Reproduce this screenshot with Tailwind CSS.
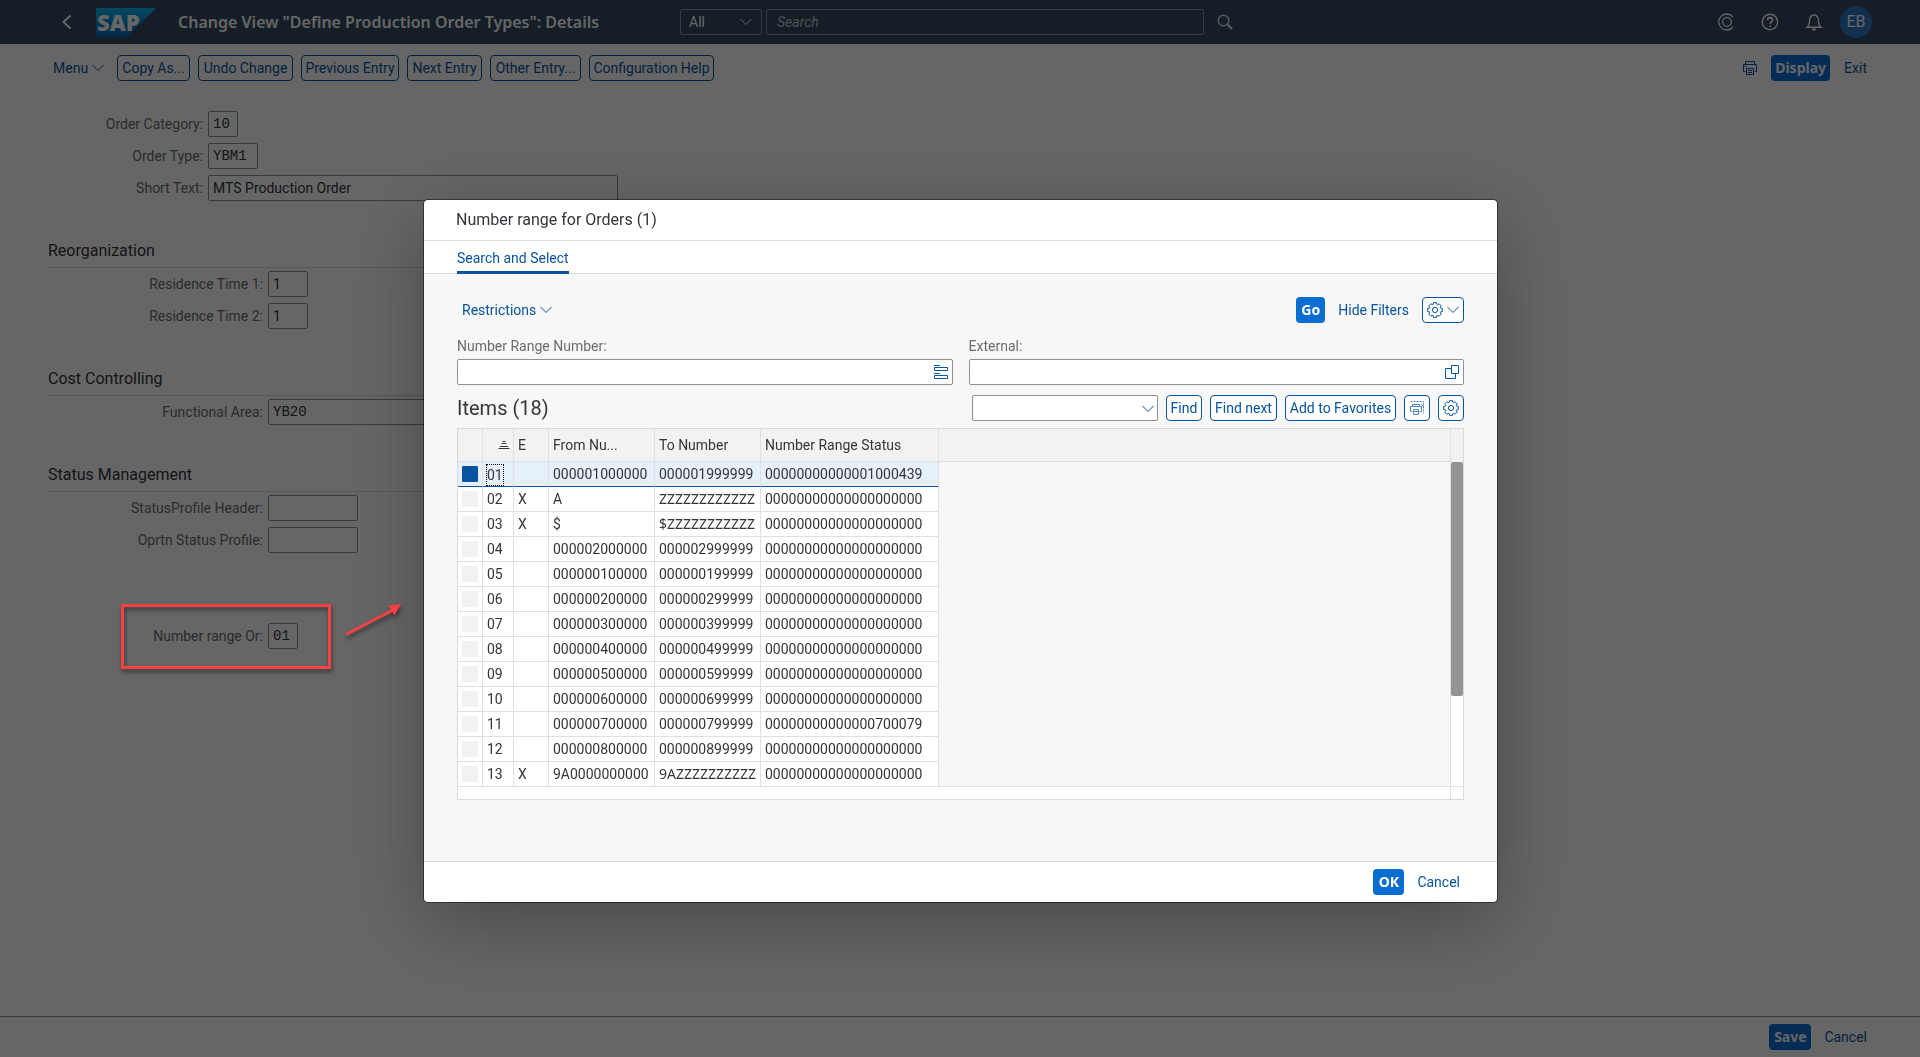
<!DOCTYPE html>
<html lang="en">
<head>
<meta charset="utf-8">
<meta name="viewport" content="width=device-width, initial-scale=1">
<title>Change View "Define Production Order Types": Details</title>
<script src="https://cdn.jsdelivr.net/npm/@tailwindcss/browser@4"></script>
</head>
<body class="min-h-screen bg-white font-['Roboto',sans-serif] text-sm text-[#32363a]">

<svg class="hidden" aria-hidden="true">
  <symbol id="gear" viewBox="-8 -8 16 16">
    <path d="M5.74-1.75 7.34-1.56V1.56L5.74 1.75 5.3 2.82 6.29 4.08 4.08 6.29 2.82 5.3 1.75 5.74 1.56 7.34H-1.56L-1.75 5.74-2.82 5.3-4.08 6.29-6.29 4.08-5.3 2.82-5.74 1.75-7.34 1.56V-1.56L-5.74-1.75-5.3-2.82-6.29-4.08-4.08-6.29-2.82-5.3-1.75-5.74-1.56-7.34H1.56L1.75-5.74 2.82-5.3 4.08-6.29 6.29-4.08 5.3-2.82Z" fill="none" stroke="currentColor" stroke-linejoin="round"/>
    <circle r="2.6" fill="none" stroke="currentColor"/>
  </symbol>
  <symbol id="chevron" viewBox="0 0 12 8">
    <path d="M.5 1 6 6.5 11.5 1" fill="none" stroke="currentColor"/>
  </symbol>
</svg>

<div class="flex min-h-screen flex-col">
  <!-- Shell bar -->
  <header class="grid h-11 grid-cols-[1fr_560px_1fr] items-center bg-[#354a5f] text-white">
    <div class="flex items-center pl-[61px]">
      <button type="button" aria-label="Back" class="w-[35px]">
        <svg class="h-4 w-3" viewBox="0 0 12 16" fill="none" stroke="currentColor" stroke-width="2"><path d="M9.500 1.500 2.500 8l7 6.500"/></svg>
      </button>
      <svg class="h-[29px] w-[60px]" viewBox="0 0 60 29" role="img" aria-label="SAP">
        <defs><linearGradient id="sap" x1="0" y1="0" x2="0" y2="1"><stop offset="0" stop-color="#00b8f1"/><stop offset="1" stop-color="#0d62b8"/></linearGradient></defs>
        <path d="M0 0H60L31 29H0Z" fill="url(#sap)"/>
        <text x="1" y="23" font-family="Open Sans, sans-serif" font-size="22" font-weight="800" fill="#fff">SAP</text>
      </svg>
      <h1 class="ml-[22px] whitespace-nowrap font-['Noto_Sans',sans-serif] text-base font-semibold">Change View "Define Production Order Types": Details</h1>
    </div>
    <form class="flex items-center gap-1">
      <div class="relative">
        <select aria-label="Search scope" class="block h-[26px] w-[82px] appearance-none rounded-[2px] border border-[#8396a8] bg-transparent px-2 text-white"><option>All</option></select>
        <svg class="pointer-events-none absolute top-2 right-[10px] h-[10px] w-3"><use href="#chevron"/></svg>
      </div>
      <input type="search" aria-label="Search" placeholder="Search" class="h-[26px] w-[438px] rounded-[2px] border border-[#8396a8] bg-transparent px-[10px] placeholder:text-[#c0ccd8] placeholder:italic">
      <button type="submit" aria-label="Search" class="pl-2">
        <svg class="h-[18px] w-[18px] text-[#d1e0ee]" viewBox="0 0 18 18" fill="none" stroke="currentColor"><circle cx="7.500" cy="7.500" r="5.300" stroke-width="1.400"/><path d="m11.500 11.500 4.500 4.500" stroke-width="2.400"/></svg>
      </button>
    </form>
    <div class="flex items-center justify-end pr-12">
      <button type="button" aria-label="Assistant" class="mr-[25px]">
        <svg class="h-[18px] w-[18px]" viewBox="0 0 18 18" fill="none" stroke="currentColor" stroke-width="1.300"><circle cx="9" cy="9" r="4.300"/><path d="M15 4A8 8 0 1 0 15 14"/></svg>
      </button>
      <button type="button" aria-label="Help" class="mr-[26px]">
        <svg class="h-[18px] w-[18px]" viewBox="0 0 18 18" fill="none" stroke="currentColor" stroke-width="1.400"><circle cx="9" cy="9" r="7.700"/><path d="M6.500 7.200c0-3.400 5-3.400 5 0 0 1.700-2.400 1.900-2.400 3.900M9.100 12.300v1.600" stroke-width="1.600"/></svg>
      </button>
      <button type="button" aria-label="Notifications" class="mr-[17px]">
        <svg class="h-[18px] w-[18px]" viewBox="0 0 18 18" fill="none" stroke="currentColor" stroke-width="1.400"><path d="M2 14.300c2-1.300 2.500-2.800 2.500-6C4.500 4.600 6 2 9 2s4.500 2.600 4.500 6.300c0 3.200.5 4.700 2.500 6Z"/><path d="M7.300 16.400h3.400" stroke-width="2"/></svg>
      </button>
      <button type="button" aria-label="User EB" class="h-8 w-8 rounded-full bg-[#2f78c4] text-base">EB</button>
    </div>
  </header>

  <!-- Page toolbar -->
  <nav aria-label="Actions" class="flex items-center gap-2 pt-[11px] pr-[53px] pl-[53px] text-[#0854a0]">
    <button type="button" class="flex w-14 items-center gap-1 whitespace-nowrap">Menu<svg class="h-2 w-3 shrink-0"><use href="#chevron"/></svg></button>
    <button type="button" class="h-[26px] w-[73px] rounded border border-[#0854a0] whitespace-nowrap">Copy As...</button>
    <button type="button" class="h-[26px] w-[95px] rounded border border-[#0854a0] whitespace-nowrap">Undo Change</button>
    <button type="button" class="h-[26px] w-[98px] rounded border border-[#0854a0] whitespace-nowrap">Previous Entry</button>
    <button type="button" class="h-[26px] w-[75px] rounded border border-[#0854a0] whitespace-nowrap">Next Entry</button>
    <button type="button" class="h-[26px] w-[91px] rounded border border-[#0854a0] whitespace-nowrap">Other Entry...</button>
    <button type="button" class="h-[26px] w-[125px] rounded border border-[#0854a0] whitespace-nowrap">Configuration Help</button>
    <div class="ml-auto flex items-center">
      <button type="button" aria-label="Print" class="mr-[13px]">
        <svg class="h-4 w-4" viewBox="0 0 16 16" fill="none" stroke="currentColor"><path d="M3.500 4.500v-3h9v3M3.500 11.500h-2v-7h13v7h-2M4.500 8.500h7v6h-7ZM6 10.500h4M6 12.500h4M2.500 6.500h2"/></svg>
      </button>
      <button type="button" class="mr-[14px] h-[26px] w-[59px] rounded bg-[#0a6ed1] font-['Noto_Sans',sans-serif] font-bold text-white">Display</button>
      <button type="button">Exit</button>
    </div>
  </nav>

  <!-- Order type form -->
  <main class="flex-1 pt-[27px] pl-12">
    <form class="w-[1200px] [&_h2]:h-8 [&_h2]:border-b [&_h2]:border-[#d9d9d9] [&_h2]:pt-[3px] [&_h2]:text-base [&_h2]:leading-6 [&_input]:h-[26px] [&_input]:rounded-[2px] [&_input]:border [&_input]:border-[#89919a] [&_input]:px-1 [&_input]:text-[#32363a] [&_label]:text-right [&_label]:text-[#6a6d70]">
      <div class="mb-8">
        <div class="flex h-8 items-center gap-[5px]"><label for="cat" class="w-[155px]">Order Category:</label><input id="cat" value="10" class="w-[30px] font-['Liberation_Mono',monospace]"></div>
        <div class="flex h-8 items-center gap-[5px]"><label for="type" class="w-[155px]">Order Type:</label><input id="type" value="YBM1" class="w-[50px] font-['Liberation_Mono',monospace]"></div>
        <div class="flex h-8 items-center gap-[5px]"><label for="short" class="w-[155px]">Short Text:</label><input id="short" value="MTS Production Order" class="w-[410px]"></div>
      </div>
      <section class="mb-8">
        <h2>Reorganization</h2>
        <div class="flex h-8 items-center gap-[5px]"><label for="rt1" class="w-[215px]">Residence Time 1:</label><input id="rt1" value="1" class="w-10"></div>
        <div class="flex h-8 items-center gap-[5px]"><label for="rt2" class="w-[215px]">Residence Time 2:</label><input id="rt2" value="1" class="w-10"></div>
      </section>
      <section class="mb-8">
        <h2>Cost Controlling</h2>
        <div class="flex h-8 items-center gap-[5px]"><label for="fa" class="w-[215px]">Functional Area:</label><input id="fa" value="YB20" class="w-[170px] font-['Liberation_Mono',monospace]"></div>
      </section>
      <section class="mb-16">
        <h2>Status Management</h2>
        <div class="flex h-8 items-center gap-[5px]"><label for="sph" class="w-[215px]">StatusProfile Header:</label><input id="sph" class="w-[90px]"></div>
        <div class="flex h-8 items-center gap-[5px]"><label for="osp" class="w-[215px]">Oprtn Status Profile:</label><input id="osp" class="w-[90px]"></div>
      </section>
      <div class="flex h-8 items-center gap-[5px]"><label for="nr" class="w-[215px]">Number range Or:</label><input id="nr" value="01" class="w-[30px] font-['Liberation_Mono',monospace]"></div>
    </form>
  </main>

  <footer class="flex h-[41px] items-center justify-end border-t border-[#89919a] pr-[53px] text-[#0854a0]">
    <button type="button" class="mr-[13px] h-[26px] w-[42px] rounded bg-[#0a6ed1] font-['Noto_Sans',sans-serif] font-bold text-white">Save</button>
    <button type="button">Cancel</button>
  </footer>
</div>

<!-- Value help dialog -->
<div class="fixed inset-0 flex items-start justify-center bg-black/60 pt-[200px] pl-px">
  <div role="dialog" aria-labelledby="dlg-title" class="w-full max-w-[1073px] overflow-hidden rounded bg-white shadow-[0_0_0_1px_rgba(0,0,0,0.45),0_20px_80px_rgba(0,0,0,0.3)]">
    <h2 id="dlg-title" class="h-[41px] border-b border-[#d9d9d9] pl-8 text-base leading-10">Number range for Orders (1)</h2>
    <div role="tablist" class="flex h-[33px] border-b border-[#d9d9d9] pl-[33px]">
      <button type="button" role="tab" aria-selected="true" class="-mb-px h-[33px] border-b-3 border-[#0854a0] pt-1 whitespace-nowrap text-[#0854a0]">Search and Select</button>
    </div>

    <div class="bg-[#f7f7f7] px-[33px] pt-[23px] pb-[61px]">
      <div class="flex h-[26px] items-center text-[#0854a0]">
        <button type="button" class="flex items-center gap-1 pl-[5px]">Restrictions<svg class="h-2 w-3"><use href="#chevron"/></svg></button>
        <button type="button" class="mr-[13px] ml-auto h-[26px] w-[29px] rounded bg-[#0a6ed1] font-['Noto_Sans',sans-serif] font-bold text-white">Go</button>
        <button type="button" class="mr-[13px]">Hide Filters</button>
        <button type="button" aria-label="Settings" class="flex h-[26px] w-[42px] items-center justify-center gap-1 rounded border border-[#0854a0] bg-white"><svg class="h-4 w-4"><use href="#gear"/></svg><svg class="h-2 w-3"><use href="#chevron"/></svg></button>
      </div>

      <div class="mt-[13px] grid grid-cols-2 gap-4 text-[#6a6d70]">
        <div>
          <label for="nrn" class="block h-[23px]">Number Range Number:</label>
          <div class="flex h-[26px] items-center rounded-[2px] border border-[#89919a] bg-white pr-[3px]">
            <input id="nrn" class="h-6 min-w-0 flex-1 px-1 outline-none">
            <button type="button" aria-label="Value list" class="text-[#0854a0]"><svg class="h-4 w-4" viewBox="0 0 16 16" fill="none" stroke="currentColor"><path d="M1 1.500h6M1.500 3.500h13v3h-13ZM1 9.500h6M1.500 11.500h13v3h-13Z"/></svg></button>
          </div>
        </div>
        <div>
          <label for="ext" class="block h-[23px]">External:</label>
          <div class="flex h-[26px] items-center rounded-[2px] border border-[#89919a] bg-white pr-[3px]">
            <input id="ext" class="h-6 min-w-0 flex-1 px-1 outline-none">
            <button type="button" aria-label="Value help" class="text-[#0854a0]"><svg class="h-4 w-4" viewBox="0 0 16 16" fill="none" stroke="currentColor"><path d="M7.500 1.500h7v8h-7ZM7.500 4.500h-6v10h10v-5"/></svg></button>
          </div>
        </div>
      </div>

      <div class="mt-[10px] flex h-[26px] items-center gap-2 text-[#0854a0]">
        <h3 class="mr-auto text-xl leading-[26px] text-[#32363a]">Items (18)</h3>
        <div class="relative">
          <select aria-label="Find term" class="block h-[26px] w-[186px] appearance-none rounded-[2px] border border-[#89919a] bg-white"><option></option></select>
          <svg class="pointer-events-none absolute top-[10px] right-1 h-2 w-3"><use href="#chevron"/></svg>
        </div>
        <button type="button" class="h-[26px] w-9 rounded border border-[#0854a0] bg-white">Find</button>
        <button type="button" class="h-[26px] w-[67px] rounded border border-[#0854a0] bg-white whitespace-nowrap">Find next</button>
        <button type="button" class="h-[26px] w-[111px] rounded border border-[#0854a0] bg-white whitespace-nowrap">Add to Favorites</button>
        <button type="button" aria-label="Print preview" class="flex h-[26px] w-[26px] items-center justify-center rounded border border-[#0854a0] bg-white"><svg class="h-4 w-4 opacity-70" viewBox="0 0 16 16" fill="none" stroke="currentColor"><path d="M1.500 1.500h13v12" stroke-dasharray="2 1"/><path d="M3.500 6.500v-2h7v2M3.500 11.500h-2v-5h11v5h-2M4.500 9.500h5v5h-5ZM5 11.500h4M12 4l3 3M15 4l-3 3"/></svg></button>
        <button type="button" aria-label="Table settings" class="flex h-[26px] w-[26px] items-center justify-center rounded border border-[#0854a0] bg-white"><svg class="h-4 w-4"><use href="#gear"/></svg></button>
      </div>

      <div class="mt-[7px] border border-[#d9d9d9]">
        <div class="flex border-b border-[#e0e0e0]">
          <div class="min-w-0 flex-1 bg-[linear-gradient(#f2f2f2_32px,#e0e0e0_32px,#e0e0e0_33px,transparent_33px)]">
            <table class="-mb-px w-[481px] table-fixed border-separate border-spacing-0 whitespace-nowrap [&_td]:h-[25px] [&_td]:border-r [&_td]:border-b [&_td]:border-[#e0e0e0] [&_td]:p-0 [&_td]:pl-1 [&_td]:leading-6 [&_th]:h-[33px] [&_th]:border-r [&_th]:border-b [&_th]:border-[#e0e0e0] [&_th]:p-0 [&_th]:pl-1 [&_th]:text-left [&_th]:font-normal [&_input]:block [&_input]:h-4 [&_input]:w-4 [&_input]:appearance-none [&_input]:rounded-[1px] [&_input]:bg-[#f2f2f2] [&_input:checked]:bg-[#0854a0]">
              <colgroup><col class="w-[25px]"><col class="w-[31px]"><col class="w-[35px]"><col class="w-[106px]"><col class="w-[106px]"><col class="w-[178px]"></colgroup>
              <thead>
                <tr><th></th><th><svg class="ml-[11px] h-3 w-3" viewBox="0 0 12 12" fill="none" stroke="currentColor" aria-label="Sorted ascending"><path d="M4.500 2.500h3M3.500 4.500h5M2 7.500h8M.5 9.500h11"/></svg></th><th>E</th><th>From Nu...</th><th>To Number</th><th>Number Range Status</th></tr>
              </thead>
              <tbody class="bg-white">
                <tr class="bg-[#e5f0fa] [&_td]:!border-b-[#0854a0]"><td><input type="checkbox" aria-label="Select 01" checked></td><td><span class="-ml-px inline-block h-[22px] border border-dotted border-black align-middle leading-5">01</span></td><td></td><td>000001000000</td><td>000001999999</td><td>00000000000001000439</td></tr>
                <tr><td><input type="checkbox" aria-label="Select 02"></td><td>02</td><td>X</td><td>A</td><td class="font-['Noto_Sans',sans-serif]">ZZZZZZZZZZZZ</td><td>00000000000000000000</td></tr>
                <tr><td><input type="checkbox" aria-label="Select 03"></td><td>03</td><td>X</td><td>$</td><td class="font-['Noto_Sans',sans-serif]">$ZZZZZZZZZZZ</td><td>00000000000000000000</td></tr>
                <tr><td><input type="checkbox" aria-label="Select 04"></td><td>04</td><td></td><td>000002000000</td><td>000002999999</td><td>00000000000000000000</td></tr>
                <tr><td><input type="checkbox" aria-label="Select 05"></td><td>05</td><td></td><td>000000100000</td><td>000000199999</td><td>00000000000000000000</td></tr>
                <tr><td><input type="checkbox" aria-label="Select 06"></td><td>06</td><td></td><td>000000200000</td><td>000000299999</td><td>00000000000000000000</td></tr>
                <tr><td><input type="checkbox" aria-label="Select 07"></td><td>07</td><td></td><td>000000300000</td><td>000000399999</td><td>00000000000000000000</td></tr>
                <tr><td><input type="checkbox" aria-label="Select 08"></td><td>08</td><td></td><td>000000400000</td><td>000000499999</td><td>00000000000000000000</td></tr>
                <tr><td><input type="checkbox" aria-label="Select 09"></td><td>09</td><td></td><td>000000500000</td><td>000000599999</td><td>00000000000000000000</td></tr>
                <tr><td><input type="checkbox" aria-label="Select 10"></td><td>10</td><td></td><td>000000600000</td><td>000000699999</td><td>00000000000000000000</td></tr>
                <tr><td><input type="checkbox" aria-label="Select 11"></td><td>11</td><td></td><td>000000700000</td><td>000000799999</td><td>00000000000000700079</td></tr>
                <tr><td><input type="checkbox" aria-label="Select 12"></td><td>12</td><td></td><td>000000800000</td><td>000000899999</td><td>00000000000000000000</td></tr>
                <tr><td><input type="checkbox" aria-label="Select 13"></td><td>13</td><td>X</td><td>9A0000000000</td><td class="font-['Noto_Sans',sans-serif]">9AZZZZZZZZZZ</td><td>00000000000000000000</td></tr>
              </tbody>
            </table>
          </div>
          <div class="w-[13px] border-l border-[#e0e0e0] bg-white">
            <div class="h-[33px] bg-[#f2f2f2]"></div>
            <div class="h-[234px] rounded-[2px] bg-[#949494]"></div>
          </div>
        </div>
        <div class="flex h-3 justify-end bg-white"><div class="w-[13px] border-l border-[#e0e0e0]"></div></div>
      </div>
    </div>

    <div class="flex h-[41px] items-center justify-end border-t border-[#d9d9d9] pr-[37px] text-[#0854a0]">
      <button type="button" class="mr-[13px] h-[26px] w-[31px] rounded bg-[#0a6ed1] font-['Noto_Sans',sans-serif] font-bold text-white">OK</button>
      <button type="button">Cancel</button>
    </div>
  </div>
</div>

<!-- Callout around the number range field, with its arrow -->
<div class="pointer-events-none absolute top-[604px] left-[121px] h-[65px] w-[210px] border-3 border-[#fa4142] drop-shadow-[1px_3px_2px_rgba(0,0,0,0.5)]"></div>
<svg class="pointer-events-none absolute top-[600px] left-[340px] h-10 w-[66px] drop-shadow-[1px_3px_2px_rgba(0,0,0,0.5)]" viewBox="0 0 66 40"><path d="M6 34.500 52 10.500" stroke="#fa4142" stroke-width="3" fill="none"/><path d="M61 4 48.500 5.500 54.500 15.500Z" fill="#fa4142"/></svg>
</body>
</html>
